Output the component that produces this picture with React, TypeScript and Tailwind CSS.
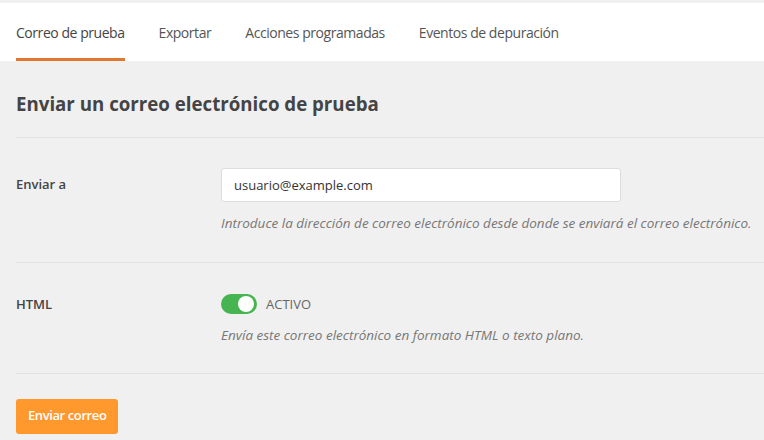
const tabs = ["Correo de prueba", "Exportar", "Acciones programadas", "Eventos de depuración"];

export default function App() {
  return (
    <div
      className="w-[764px] h-[440px] overflow-hidden bg-[#f0f0f0] pt-[3px] text-[#444]"
      style={{ fontFamily: '"Open Sans", "Noto Sans", sans-serif' }}
    >
      <nav className="flex h-[58px] gap-[34px] bg-white pl-4">
        {tabs.map((t, i) => (
          <div
            key={t}
            className={`flex items-center pt-[1px] text-[14px] tracking-[-0.45px] ${
              i === 0 ? "border-b-[3px] border-[#e27730] pt-[4px] text-[#444]" : "text-[#555]"
            }`}
          >
            {t}
          </div>
        ))}
      </nav>

      <div className="pl-4">
        <h1 className="flex h-[77px] items-center border-b border-[#e2e2e2] pt-[10px] text-[18.7px] font-bold text-[#444]">
          Enviar un correo electrónico de prueba
        </h1>

        <div className="flex border-b border-[#e2e2e2] pt-[30px] pb-[29px]">
          <div className="flex h-[34px] w-[205px] shrink-0 items-center text-[13px] font-semibold text-[#444]">
            Enviar a
          </div>
          <div className="flex-1">
            <input
              readOnly
              value="usuario@example.com"
              className="h-[34px] w-[400px] rounded-[3px] border border-[#ddd] bg-white px-3 text-[13px] text-[#333] outline-none"
            />
            <p className="mt-[11px] text-[13.5px] italic text-[#777]">
              Introduce la dirección de correo electrónico desde donde se enviará el correo electrónico.
            </p>
          </div>
        </div>

        <div className="flex border-b border-[#e2e2e2] pt-[31px] pb-[27px]">
          <div className="flex h-[20px] w-[205px] shrink-0 items-center text-[13px] font-semibold text-[#444]">
            HTML
          </div>
          <div className="flex-1">
            <div className="flex h-[20px] items-center gap-[9px]">
              <span className="flex h-[20px] w-[36px] items-center justify-end rounded-full bg-[#46b450] pr-[3px]">
                <span className="h-[16px] w-[16px] rounded-full bg-white" />
              </span>
              <span className="text-[13px] text-[#666]">ACTIVO</span>
            </div>
            <p className="mt-[11px] text-[13.5px] italic text-[#777]">
              Envía este correo electrónico en formato HTML o texto plano.
            </p>
          </div>
        </div>

        <div className="pt-[25px]">
          <button className="h-[35px] rounded-[3px] bg-[#ff982d] px-[12px] text-[13px] font-semibold tracking-[-0.4px] text-white">
            Enviar correo
          </button>
        </div>
      </div>
    </div>
  );
}
